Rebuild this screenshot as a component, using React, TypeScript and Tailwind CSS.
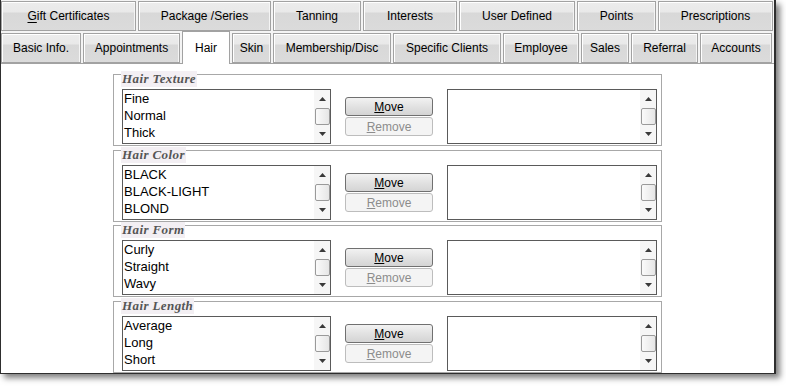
import React from 'react';

const rowOne = [
  { label: 'Gift Certificates', w: 'w-[135px]', key: 'G' },
  { label: 'Package /Series', w: 'w-[133px]' },
  { label: 'Tanning', w: 'w-[88px]' },
  { label: 'Interests', w: 'w-[94px]' },
  { label: 'User Defined', w: 'w-[116px]' },
  { label: 'Points', w: 'w-[79px]' },
  { label: 'Prescriptions', w: 'w-[115px]' },
];

const rowTwo = [
  { label: 'Basic Info.', w: 'w-[80px]' },
  { label: 'Appointments', w: 'w-[97px]' },
  { label: 'Hair', w: 'w-[48px]', active: true },
  { label: 'Skin', w: 'w-[39px]' },
  { label: 'Membership/Disc', w: 'w-[118px]' },
  { label: 'Specific Clients', w: 'w-[108px]' },
  { label: 'Employee', w: 'w-[76px]' },
  { label: 'Sales', w: 'w-[48px]' },
  { label: 'Referral', w: 'w-[67px]' },
  { label: 'Accounts', w: 'w-[72px]' },
];

// spacing between boxes isn't even in the original (4/3/4)
const groups = [
  { title: 'Hair Texture', items: ['Fine', 'Normal', 'Thick'], mt: 'mt-0' },
  { title: 'Hair Color', items: ['BLACK', 'BLACK-LIGHT', 'BLOND'], mt: 'mt-[4px]' },
  { title: 'Hair Form', items: ['Curly', 'Straight', 'Wavy'], mt: 'mt-[3px]' },
  { title: 'Hair Length', items: ['Average', 'Long', 'Short'], mt: 'mt-[4px]' },
];

const tabBase =
  'h-[30px] shrink-0 flex items-center justify-center border border-[#a2a2a2] bg-[linear-gradient(#ececec,#e9e9e9_35%,#d8d8d8_40%,#dbdbdb)] shadow-[inset_1px_1px_0_#ffffff,inset_-1px_0_0_#f4f4f4] text-[12px] text-black';

const Tab = ({ label, w, hotkey }: { label: string; w: string; hotkey?: string }) => (
  <div className={`${tabBase} ${w}`}>
    {hotkey ? (
      <span>
        <span className="underline underline-offset-2">{label[0]}</span>
        {label.slice(1)}
      </span>
    ) : (
      <span>{label}</span>
    )}
  </div>
);

const Arrow = ({ up }: { up?: boolean }) => (
  <svg width="7" height="4" viewBox="0 0 7 4">
    <path d={up ? 'M0 4 L3.5 0 L7 4 Z' : 'M0 0 L3.5 4 L7 0 Z'} fill="#3a3a3a" />
  </svg>
);

const ScrollBar = () => (
  <div className="w-[16px] h-full flex flex-col items-center bg-[#f6f6f6]">
    <div className="h-[17px] w-full flex items-center justify-center">
      <Arrow up />
    </div>
    <div className="h-[17px] w-[15px] mt-px rounded-[2px] border border-[#9a9a9a] bg-[linear-gradient(90deg,#fafafa,#e6e6e6)]" />
    <div className="flex-1 w-full flex items-center justify-center">
      <Arrow />
    </div>
  </div>
);

const ListBox = ({ items, w }: { items: string[]; w: string }) => (
  <div className={`${w} h-[55px] border border-[#5a5a5a] bg-white flex`}>
    <div className="flex-1 flex flex-col pl-px text-[13px] text-black">
      {items.map((item) => (
        <div key={item} className="h-[17px] leading-[17px]">
          {item}
        </div>
      ))}
    </div>
    <ScrollBar />
  </div>
);

const Group = ({ title, items, mt }: { title: string; items: string[]; mt: string }) => (
  <div className={`relative w-[549px] h-[72px] border border-[#a8a8a8] ${mt}`}>
    <span className="absolute -top-[4px] left-[7px] h-[16px] px-px bg-[#f3eff3] text-[13px] leading-[16px] font-bold italic tracking-[0.4px] text-[#555555] [font-family:'Liberation_Serif',serif]">
      {title}
    </span>
    <div className="flex pt-[14px] pl-[8px]">
      <ListBox items={items} w="w-[209px]" />
      <div className="ml-[14px] pt-[8px] w-[88px] flex flex-col gap-px text-[12px]">
        <button className="h-[19px] rounded-[3px] border border-[#707070] bg-[linear-gradient(#f2f2f2,#e2e2e2_50%,#d4d4d4)] text-black">
          <span className="underline">M</span>ove
        </button>
        <button className="h-[19px] rounded-[3px] border border-[#bdbdbd] bg-[#f4f4f4] text-[#8c8c8c]">
          <span className="underline">R</span>emove
        </button>
      </div>
      <div className="ml-[14px]">
        <ListBox items={[]} w="w-[210px]" />
      </div>
    </div>
  </div>
);

export default function App() {
  return (
    <div className="w-[786px] h-[386px] bg-white [font-family:'Liberation_Sans',Arial,sans-serif]">
      <div className="w-[776px] h-[374px] bg-white border-l border-r-2 border-b-2 border-[#2e2e2e] shadow-[4px_4px_6px_rgba(0,0,0,0.5)] flex flex-col">
        <div className="bg-[#f4f4f4]">
          <div className="flex gap-[2px] pt-px h-[31px]">
            {rowOne.map((t) => (
              <Tab key={t.label} label={t.label} w={t.w} hotkey={t.key} />
            ))}
          </div>
          <div className="flex items-end gap-[2px] h-[32px]">
            {rowTwo.map((t) =>
              t.active ? (
                <div
                  key={t.label}
                  className={`${t.w} h-[33px] -mb-px relative z-10 shrink-0 bg-white border border-b-0 border-[#a2a2a2] flex justify-center pt-[7px] text-[12px] text-black`}
                >
                  {t.label}
                </div>
              ) : (
                <Tab key={t.label} label={t.label} w={t.w} />
              )
            )}
          </div>
        </div>
        <div className="flex-1 bg-white border-t border-[#a2a2a2] pt-[10px] pl-[112px]">
          {groups.map((g) => (
            <Group key={g.title} title={g.title} items={g.items} mt={g.mt} />
          ))}
        </div>
      </div>
    </div>
  );
}
